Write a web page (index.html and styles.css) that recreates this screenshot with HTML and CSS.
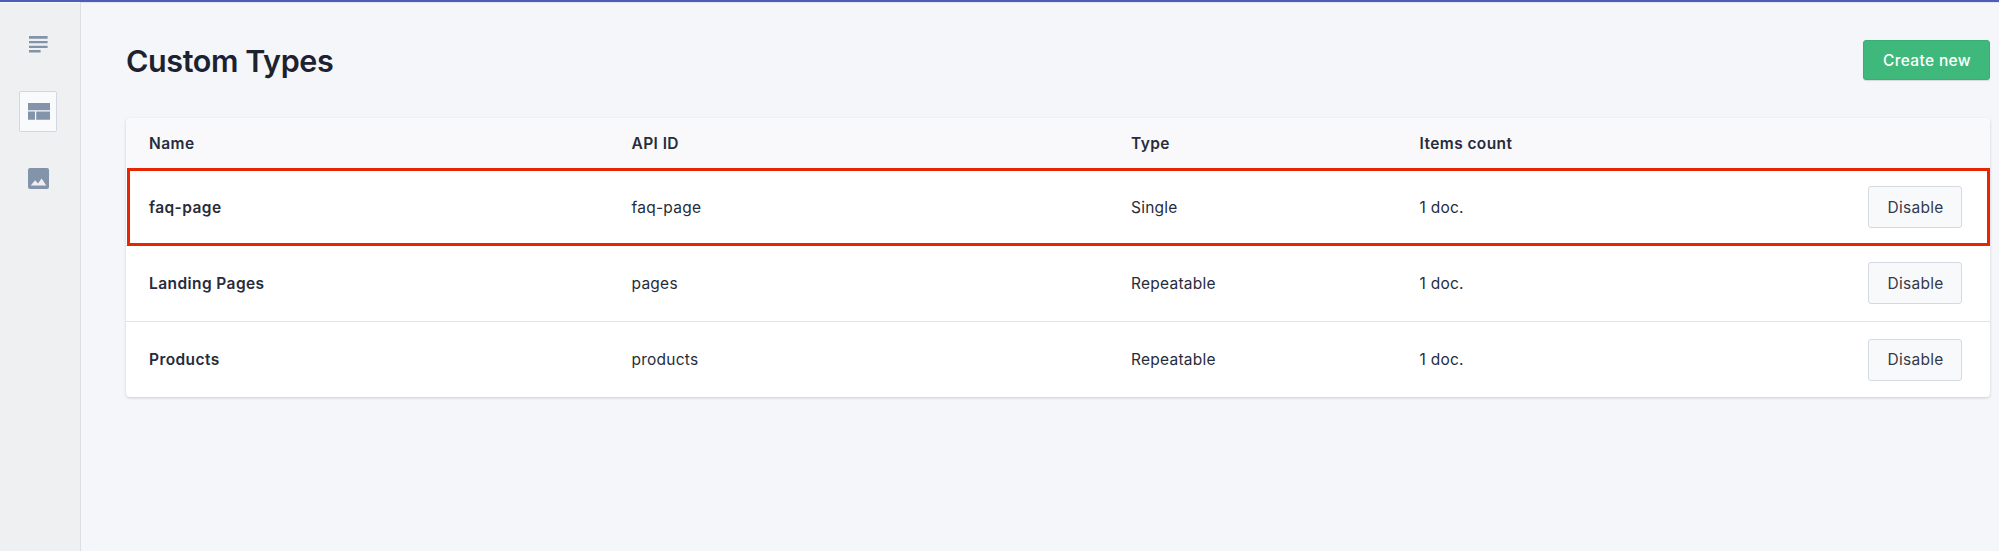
FILE: index.html
```html
<!DOCTYPE html>
<html lang="en">
<head>
<meta charset="utf-8">
<title>Custom Types</title>
<link rel="stylesheet" href="styles.css">
</head>
<body>
<div class="app">
  <nav class="sidebar">
    <a class="nav-item" aria-label="Documents">
      <svg width="19" height="17" viewBox="0 0 19 17"><path d="M0 0h18.6v2.8H0zM0 5h18.6v2.3H0zM0 9.7h18.6v2.3H0zM0 14h11.6v2.6H0z"/></svg>
    </a>
    <a class="nav-item nav-item-active" aria-label="Custom types">
      <svg width="22" height="17" viewBox="0 0 22 17"><path d="M0 0h22v7.3H0zM0 8.4h7v8.4H0zM8.2 8.4h13.8v8.4H8.2z"/></svg>
    </a>
    <a class="nav-item" aria-label="Media">
      <svg width="21" height="21" viewBox="0 0 21 21"><path fill-rule="evenodd" d="M2 0h17a2 2 0 0 1 2 2v17a2 2 0 0 1-2 2H2a2 2 0 0 1-2-2V2a2 2 0 0 1 2-2zM2.7 17.6h15.6l-4.7-7.2-3.6 5-2.9-3.2z"/></svg>
    </a>
  </nav>
  <main class="content">
    <header class="page-header">
      <h1 class="title">Custom Types</h1>
      <button class="button button-primary">Create new</button>
    </header>
    <section class="table">
      <div class="row row-head"><span>Name</span><span>API ID</span><span>Type</span><span>Items count</span></div>
      <div class="row row-highlighted"><b class="name">faq-page</b><span>faq-page</span><span>Single</span><span>1 doc.</span><button class="button">Disable</button></div>
      <div class="row"><b class="name">Landing Pages</b><span>pages</span><span>Repeatable</span><span>1 doc.</span><button class="button">Disable</button></div>
      <div class="row row-last"><b class="name">Products</b><span>products</span><span>Repeatable</span><span>1 doc.</span><button class="button">Disable</button></div>
    </section>
  </main>
</div>
</body>
</html>
```
FILE: styles.css
```css
* {
  box-sizing: border-box;
}

body {
  margin: 0;
  background: #f5f6fa;
  color: #262c3c;
  font-family: Inter, "Liberation Sans", sans-serif;
  font-size: 15.5px;
  letter-spacing: 0.25px;
}

.app {
  display: flex;
  height: 551px;
  border-top: 2px solid #4f5db5;
  box-shadow: inset 0 1px #e2e5f4;
}

.sidebar {
  display: flex;
  flex: none;
  flex-direction: column;
  align-items: center;
  gap: 26px;
  width: 81px;
  padding: 22px 5px 0 0;
  background: #eef0f1;
  border-right: 1px solid #dcdfe5;
  box-shadow: inset 0 1px #f8f9fc;
}

.nav-item {
  display: flex;
  align-items: center;
  justify-content: center;
  width: 38px;
  height: 41px;
  padding-left: 2px;
  fill: #8293aa;
}

.nav-item-active {
  background: #f9fafc;
  border: 1px solid #d3d7e0;
  border-radius: 2px;
}

.content {
  flex: 1;
  padding: 38px 9px 0 45px;
}

.page-header {
  display: flex;
  align-items: center;
  justify-content: space-between;
  height: 40px;
  margin-bottom: 38px;
}

.title {
  margin: 1px 0 0;
  color: #1d2230;
  font-size: 30.5px;
  font-weight: 600;
  letter-spacing: -0.4px;
}

.button {
  width: 94px;
  height: 42px;
  padding: 0 0 0 1px;
  background: #f8f9fb;
  border: 1px solid #d5dae2;
  border-radius: 3px;
  color: #343a4a;
  font: inherit;
  letter-spacing: inherit;
}

.button-primary {
  width: 127px;
  height: 40px;
  background: #3fb87c;
  border-color: #37ae72;
  box-shadow: 0 1px 1px #d3d9dd;
  color: #fff;
  font-weight: 500;
  letter-spacing: 0.35px;
}

.table {
  background: #fff;
  border-radius: 4px;
  box-shadow: 0 1px 3px rgba(40, 44, 60, 0.2);
}

.row {
  display: grid;
  grid-template-columns: 482.5px 499.5px 288.5px 1fr 94px;
  align-items: center;
  height: 76px;
  padding: 0 28px 1px 23px;
}

.row + .row {
  border-top: 1px solid #e0e2e5;
}

.row-head {
  height: 50px;
  padding-bottom: 0;
  background: #f9f9fb;
  border-radius: 4px 4px 0 0;
  font-weight: 600;
  letter-spacing: 0.42px;
}

.row-last {
  padding-bottom: 0;
}

/* The outline lies over the separator of the row below. */
.row.row-highlighted {
  position: relative;
  height: 78px;
  margin: 0 0 -1px 1px;
  padding: 0 28px 1px 22px;
  border-top-color: transparent;
  outline: 3px solid #e62600;
  outline-offset: -3px;
}

.name {
  font-weight: 600;
  letter-spacing: 0.42px;
}
```
